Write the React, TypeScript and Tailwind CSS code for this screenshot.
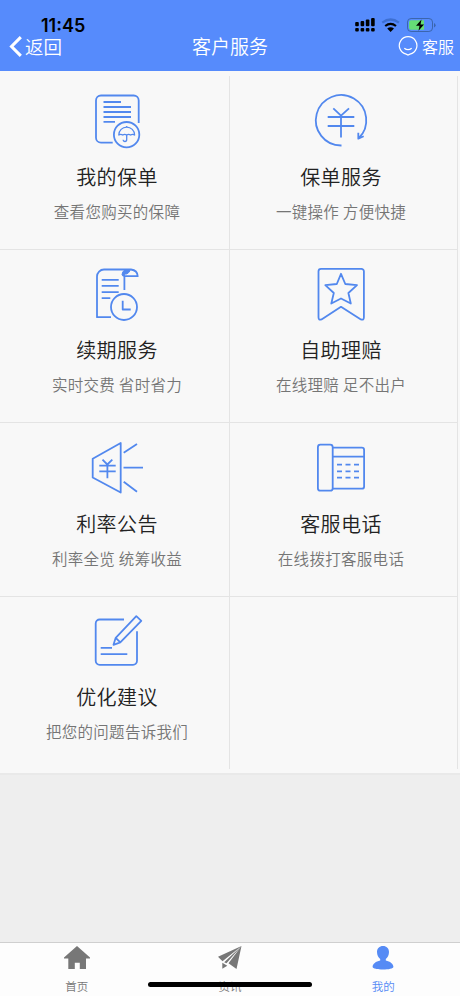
import type { ReactNode } from "react";

type Service = {
  title: string;
  desc: string;
  icon: ReactNode;
};

const services: Service[] = [
  {
    title: "我的保单",
    desc: "查看您购买的保障",
    icon: (
      <>
        <path d="M51.7 33V10.5a5 5 0 0 0-5-5H14a5 5 0 0 0-5 5v37.2a5 5 0 0 0 5 5h11.7" />
        <path d="M16.5 12H34M16.5 17H44M16.5 22H44M16.5 27H44M16.5 31.8H28" />
        <circle cx="39.6" cy="44.7" r="12.7" />
        <path
          strokeWidth="1.3"
          d="M31.8 45a7.9 7.9 0 0 1 15.8 0q-2-1.4-4 0q-2-1.4-3.9 0q-2-1.4-3.9 0q-2-1.4-4 0zM39.7 37v-1M39.7 45v4.5q0 2-1.8 2t-1.8-1.8"
        />
      </>
    ),
  },
  {
    title: "保单服务",
    desc: "一键操作 方便快捷",
    icon: (
      <>
        <path d="M30.5 55.5A25.2 25.2 0 1 1 47.5 48.5M47.3 42.7v6l5.4-2.4" />
        <path d="m22.3 18.3 7.7 7.4 8-7.4M16.7 27h26.6M16.7 36h26.6M30 25.7v21.8" />
      </>
    ),
  },
  {
    title: "续期服务",
    desc: "实时交费 省时省力",
    icon: (
      <>
        <path d="M24 54.2H10V13.5a7 7 0 0 1 7-7h27q6.4.8 6.7 6.7H37.4V27" />
        <path
          fill="currentColor"
          strokeWidth="1"
          d="M39 6.5q-4 1.5-4 5 0 1.7 2.4 1.7V11q2.4.6 4.3-1.4 1.5-1.5 1.3-3.1z"
        />
        <path d="M14.7 16.8h17M14.7 22.8h17M14.7 29.2h17M14.7 35.2h8.6" />
        <circle cx="37" cy="44" r="13" />
        <path d="M35.7 37.8v8.7h8" />
      </>
    ),
  },
  {
    title: "自助理赔",
    desc: "在线理赔 足不出户",
    icon: (
      <>
        <path d="M7.5 8.3a2.5 2.5 0 0 1 2.5-2.5h40.4a2.5 2.5 0 0 1 2.5 2.5v46q0 3.3-3 2.1L30 43.8 10.5 56.4q-3 1.2-3-2.1z" />
        <path d="m30 10.8 4.3 10.2 11.7 1.2-8.6 7.8 2.4 10.5-9.8-5-9.7 5 2.5-10.5-8.5-7.8 11.5-1.2z" />
      </>
    ),
  },
  {
    title: "利率公告",
    desc: "利率全览 统筹收益",
    icon: (
      <>
        <path d="M5.7 21.7 33.7 6v49.5l-28-15zM36.7 15.7 50 7M36.5 30.7H56M36.7 44.7l13.3 10" />
        <path d="m15.5 22.7 4.8 4.8 5-4.8M12.3 28.7h16.4M12.3 34.3h16.4M20.4 27.5v13.8" />
      </>
    ),
  },
  {
    title: "客服电话",
    desc: "在线拨打客服电话",
    icon: (
      <>
        <rect x="6.9" y="7.7" width="14.8" height="46" rx="2.5" />
        <path d="M21.7 10.7h29.1a2.3 2.3 0 0 1 2.3 2.3v36.4a2.3 2.3 0 0 1-2.3 2.3H21.7M21.7 19.7h31.4" />
        <path d="M26 27.7h5M34.5 27.7h5M43 27.7h5M26 34.3h5M34.5 34.3h5M43 34.3h5M26 40.7h5M34.5 40.7h5M43 40.7h5" />
      </>
    ),
  },
  {
    title: "优化建议",
    desc: "把您的问题告诉我们",
    icon: (
      <>
        <path d="M37 9.5H12.7a4 4 0 0 0-4 4v37.3a4 4 0 0 0 4 4H46a4 4 0 0 0 4-4V21.2M13.7 37.8H25M13.7 44.2h26.6" />
        <path d="M26.5 34.8 28.7 27.8 49.3 6.2l5 4.6-21 21.6zM28.7 27.8l4.6 4.6" />
      </>
    ),
  },
];

function ServiceCell({ title, desc, icon }: Service) {
  return (
    <div className="flex flex-col items-center border-r border-b border-[#e4e4e4] pt-[13.5px] odd:pl-[5px] even:pr-[5px]">
      <svg
        className="size-[60px] shrink-0 text-[#5288ee]"
        viewBox="0 0 60 60"
        fill="none"
        stroke="currentColor"
        strokeWidth="1.8"
        strokeLinejoin="round"
      >
        {icon}
      </svg>
      <h2 className="mt-[12px] text-[20px] leading-[30px] font-[350] tracking-[0.4px] whitespace-nowrap text-[#222]">
        {title}
      </h2>
      <p className="mt-[7px] text-[15.5px] leading-[24px] font-[350] tracking-[0.3px] whitespace-nowrap text-[#757575]">
        {desc}
      </p>
    </div>
  );
}

function StatusIcons() {
  return (
    <svg className="h-[22px] w-[82px]" viewBox="355 14 82 22">
      {[
        { x: 355.2, y: 22 },
        { x: 360.6, y: 21 },
        { x: 365.8, y: 19.5 },
        { x: 371.1, y: 18 },
      ].map(({ x, y }) => (
        <g key={x}>
          <rect x={x} y={y} width="3.6" height={26.2 - y} rx="1" />
          <rect x={x} y="28" width="3.6" height="3.5" rx="1" />
        </g>
      ))}
      <g fill="none" strokeWidth="2.2">
        <path stroke="#3d6fd2" d="M382.3 22.7q8.3-6.4 16.6 0" />
        <path stroke="#000" d="M385.2 26q5.4-4.2 10.8 0" />
      </g>
      <path d="M387.2 28.5q3.4-2.6 6.8 0l-3.4 3.4z" />
      <rect x="407.5" y="18.5" width="25" height="13" rx="3.6" fill="none" stroke="#3b65ad" />
      <path d="M411 20.2h13v9.6h-13q-2 0-2-2v-5.6q0-2 2-2z" fill="#65dc76" />
      <path d="M434 23v4.5q1.6-.6 1.6-2.2T434 23z" fill="#3b65ad" />
      <path d="m421.5 19.5-5.5 6.2h3.5l-1 5 5.5-6.3h-3.5z" />
    </svg>
  );
}

function Header() {
  return (
    <header className="h-[71px] shrink-0 bg-[#568bfc] pt-[14px] font-[350] text-white">
      <div className="flex h-[22px] items-center justify-between pr-[23px] pl-[41px] text-black">
        <span className="pt-px font-['Inter'] text-[18px] leading-[22px] font-semibold">11:45</span>
        <StatusIcons />
      </div>
      <div className="-mt-[2px] grid h-[24px] grid-cols-[1fr_auto_1fr] items-center">
        <div className="flex items-center pl-[8px]">
          <svg className="mt-px h-[23px] w-[17px]" viewBox="0 0 17 24" fill="none" stroke="white" strokeWidth="3.2">
            <path d="M13 2.2 3.3 12 13 21.8" />
          </svg>
          <span className="text-[18.5px] leading-[20px]">返回</span>
        </div>
        <h1 className="text-[19px] leading-[20px]">客户服务</h1>
        <div className="flex items-center justify-end pr-[6px]">
          <svg className="mr-[4px] size-[20px]" viewBox="0 0 20 20" fill="none" stroke="white" strokeWidth="1.2">
            <path d="M8.2 18.1A8.8 8.8 0 1 1 12 18.1L10 19z" />
            <path d="M6.3 12.2q3.7 3 7.4 0" />
          </svg>
          <span className="text-[16px] leading-[20px]">客服</span>
        </div>
      </div>
    </header>
  );
}

function TabBar() {
  return (
    <nav className="relative grid h-[54px] shrink-0 grid-cols-3 border-t border-[#cfcfcf] bg-[#fdfdfd] text-[11.5px] leading-[16px] font-[350] text-[#777]">
      <div className="flex flex-col items-center pt-[3px]">
        <svg className="h-[24px] w-[26px]" viewBox="0 0 26 24" fill="currentColor">
          <path d="M13 0 26 11.5v1h-4V23h-6.2v-6.3h-5V23H4.3V12.5H0v-1z" />
        </svg>
        <span className="mt-[8px]">首页</span>
      </div>
      <div className="flex flex-col items-center pt-[3px]">
        <svg className="h-[24px] w-[24px]" viewBox="0 0 24 24" fill="currentColor">
          <path d="M23.5 0 0 10.8l4.5 4.5zM23.5 0 6.2 16.2l2.3 1.1zM23.5 0 10.5 17.3l8 5.7zM4.3 16.8v6l5-3z" />
        </svg>
        <span className="mt-[8px]">资讯</span>
      </div>
      <div className="flex flex-col items-center pt-[3px] text-[#568bf5]">
        <svg className="h-[24px] w-[22px]" viewBox="0 0 22 24" fill="currentColor">
          <path d="M11 0c3.6 0 6 2.4 6 6 0 3.2-1.5 5.7-3.2 7v1.6c4.3.8 7.6 3.5 7.6 6.2 0 2-5 2.7-10.4 2.7S.6 22.8.6 20.8c0-2.7 3.3-5.4 7.6-6.2V13C6.5 11.7 5 9.2 5 6c0-3.6 2.4-6 6-6z" />
        </svg>
        <span className="mt-[8px]">我的</span>
      </div>
      <div className="absolute top-[39px] left-[148px] h-[5px] w-[164px] rounded-full bg-black" />
    </nav>
  );
}

export default function App() {
  return (
    <div className="flex h-[996px] w-[460px] flex-col overflow-hidden bg-[#eee] font-['Noto_Sans_CJK_SC',sans-serif]">
      <Header />
      <main className="flex-1">
        <div className="border-b-2 border-[#e9e9e9] bg-[#f8f8f8] pt-[5px] pb-[4px]">
          <div className="grid w-[458px] grid-cols-[230px_228px] grid-rows-[173.5px_173.5px_173.5px_172px] [&>*:nth-last-child(-n+2)]:border-b-0">
            {services.map((service) => (
              <ServiceCell key={service.title} {...service} />
            ))}
            <div className="border-r border-[#e4e4e4]" />
          </div>
        </div>
      </main>
      <TabBar />
    </div>
  );
}
